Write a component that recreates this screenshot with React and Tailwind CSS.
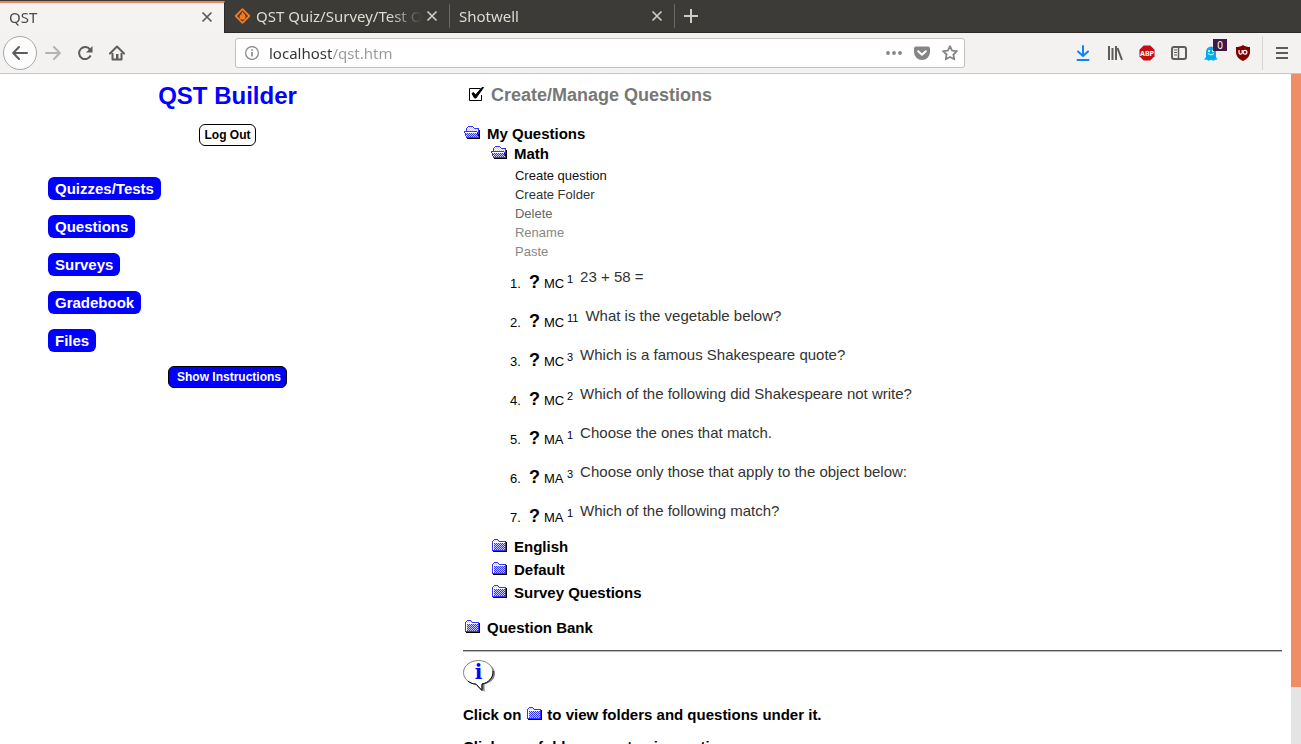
import React from 'react';

const palette = { B: '#3333ff', k: '#000000', l: '#ccccff', w: '#ffffff' };

const closedFolder = [
  '...BBBB.........',
  '..BwlwlB........',
  '.BwlwlwlBBBBBBB.',
  '.BwwwwwwwwwwwwBk',
  '.BwBlBlBlBlBlBBk',
  '.BwlBlBlBlBlBlBk',
  '.BwBlBlBlBlBlBBk',
  '.BwlBlBlBlBlBlBk',
  '.BwBlBlBlBlBlBBk',
  '.BwlBlBlBlBlBlBk',
  '.BwBlBlBlBlBlBBk',
  '.BBBBBBBBBBBBBBk',
  '..kkkkkkkkkkkkkk',
];

const openFolder = [
  '....BBBBB.......',
  '...BwlwlwB......',
  '..BwlwlwlwBBBBB.',
  '..BlwlwlwlwlwlB.',
  '..BwlwlwlwlwlwBk',
  'BBBBBBBBBBBBBlBk',
  'BwwwwwwwwwwwwBBk',
  '.BlBlBlBlBlBlkBk',
  '.BBlBlBlBlBlBBkk',
  '.BwBlBlBlBlBlBkk',
  '..BlBlBlBlBlBlBk',
  '..BBBBBBBBBBBBBk',
  '...kkkkkkkkkkkkk',
];

const Folder = ({ open }) => (
  <svg width="16" height="13" viewBox="0 0 16 13" shapeRendering="crispEdges" className="mt-[2px] shrink-0">
    {(open ? openFolder : closedFolder).map((row, y) =>
      row.split('').map((c, x) =>
        c === '.' ? null : <rect key={`${x}-${y}`} x={x} y={y} width="1" height="1" fill={palette[c]} />
      )
    )}
  </svg>
);

const FolderRow = ({ name, open, className = '' }) => (
  <button className={`flex items-start gap-[7px] text-[15px] leading-5 font-bold ${className}`}>
    <Folder open={open} />
    {name}
  </button>
);

const CloseIcon = () => (
  <svg width="12" height="12" viewBox="0 0 12 12" fill="none" stroke="currentColor" strokeWidth="1.7">
    <path d="M1.5 1.5l9 9M10.5 1.5l-9 9" />
  </svg>
);

const Tab = ({ title, active, icon }) => (
  <div
    className={`flex w-[225px] items-center border-r pl-[9px] pr-[11px] ${
      active
        ? 'mt-px h-8 border-r-[#2a2925] border-t-2 border-t-[#f0845c] bg-[#f4f3f2] pb-[3px] text-[#4a4a4a]'
        : 'mt-1 h-6 border-r-[#6a6965] text-[#dfdbd2]'
    }`}
  >
    {icon}
    <button className="min-w-0 flex-1 overflow-hidden text-left whitespace-nowrap [mask-image:linear-gradient(90deg,#000_calc(100%-32px),transparent)]">
      {title}
    </button>
    <button aria-label={`Close ${title}`} className="ml-1 opacity-90">
      <CloseIcon />
    </button>
  </div>
);

const ToolButton = ({ label, children, className = 'h-8 w-8' }) => (
  <button aria-label={label} className={`flex shrink-0 items-center justify-center ${className}`}>
    {children}
  </button>
);

const line = { width: 16, height: 16, viewBox: '0 0 16 16', fill: 'none', stroke: 'currentColor', strokeWidth: 2 };

const TabBar = () => (
  <div className="flex h-[33px] items-start border-b border-[#2a2925] bg-[#3c3b37] text-[15px] leading-5">
    <Tab title="QST" active />
    <Tab
      title="QST Quiz/Survey/Test O"
      icon={
        <svg width="17" height="16" viewBox="0 0 17 16" className="mr-[5px] shrink-0">
          <path d="M8.5 1.2L15.3 8l-6.8 6.8L1.7 8z" fill="none" stroke="#f47b20" strokeWidth="1.8" strokeLinejoin="round" />
          <path d="M8.8 3.6c.2 1.8 2.7 2.8 2.7 5.1a3 3 0 0 1-6 0c0-1.1.5-1.8 1.1-2.5.1.7.3 1 .7 1.2-.2-1.500.4-2.900 1.500-3.800z" fill="#f47b20" />
        </svg>
      }
    />
    <Tab title="Shotwell" />
    <button aria-label="New tab" className="flex h-8 w-8 items-center justify-center text-[#d2cdc4]">
      <svg width="14" height="14" viewBox="0 0 14 14" stroke="currentColor" strokeWidth="2">
        <path d="M7 0v14M0 7h14" />
      </svg>
    </button>
  </div>
);

const Toolbar = () => (
  <div className="flex h-[41px] items-center border-b border-[#c4c4c4] bg-[#f3f2f1] pl-[3px] text-[#5c5c5c]">
    <ToolButton label="Back" className="h-[34px] w-[34px] rounded-full border border-[#a9a7a5] bg-[#fcfcfc]">
      <svg {...line} strokeLinecap="round" strokeLinejoin="round">
        <path d="M15 8H1.5M7 2L1.2 8 7 14" />
      </svg>
    </ToolButton>
    <ToolButton label="Forward">
      <svg {...line} strokeLinecap="round" strokeLinejoin="round" className="text-[#b5b4b3]">
        <path d="M1 8h13.5M9 2l5.8 6L9 14" />
      </svg>
    </ToolButton>
    <ToolButton label="Reload">
      <svg {...line}>
        <path d="M13 4.6A6 6 0 1 0 13.6 10.5" />
        <path d="M15.5 1v6.5H9z" fill="currentColor" stroke="none" />
      </svg>
    </ToolButton>
    <ToolButton label="Home">
      <svg {...line}>
        <path d="M1 8.5L8 1.5l7 7" strokeLinecap="round" strokeLinejoin="round" />
        <path d="M3.5 8v6.5h9V8" strokeLinejoin="round" />
        <path d="M7 9h2.5v6H7z" fill="currentColor" stroke="none" />
      </svg>
    </ToolButton>

    <div className="mx-[102px] flex h-[30px] min-w-0 flex-1 items-center rounded-[3px] border border-[#c5c1be] bg-white pl-[9px] text-[#858585]">
      <svg width="14" height="14" viewBox="0 0 14 14" fill="none" stroke="currentColor" className="shrink-0">
        <circle cx="7" cy="7" r="6.4" strokeWidth="1.2" />
        <path d="M7 6v4.5M7 3.2v1.6" strokeWidth="1.6" />
      </svg>
      <input
        aria-label="Address"
        defaultValue="localhost/qst.htm"
        className="ml-[10px] min-w-0 flex-1 bg-[linear-gradient(90deg,#333_63px,#999_63px)] bg-clip-text text-[15px] leading-5 text-transparent outline-none"
      />
      <ToolButton label="Page actions" className="h-7 w-7">
        <svg width="16" height="4" viewBox="0 0 16 4" fill="currentColor">
          <circle cx="2" cy="2" r="1.9" />
          <circle cx="8" cy="2" r="1.9" />
          <circle cx="14" cy="2" r="1.9" />
        </svg>
      </ToolButton>
      <ToolButton label="Save to Pocket" className="h-7 w-7">
        <svg width="16" height="16" viewBox="0 0 16 16">
          <path d="M2 1.5h12a2 2 0 0 1 2 2V7a8 8 0 0 1-16 0V3.5a2 2 0 0 1 2-2z" fill="currentColor" />
          <path d="M4.2 6.2L8 9.8l3.8-3.6" fill="none" stroke="#fff" strokeWidth="2" strokeLinecap="round" strokeLinejoin="round" />
        </svg>
      </ToolButton>
      <ToolButton label="Bookmark" className="h-7 w-7">
        <svg {...line} strokeWidth="1.8" strokeLinejoin="round">
          <path d="M8 1.2l2.1 4.4 4.8.6-3.5 3.3.9 4.8L8 12l-4.3 2.3.9-4.8L1.1 6.2l4.8-.6z" />
        </svg>
      </ToolButton>
    </div>

    <ToolButton label="Downloads">
      <svg {...line} className="text-[#0a84ff]" strokeLinecap="round" strokeLinejoin="round">
        <path d="M8 1v9.5M3 6.500l5 4.500 5-4.500M2.500 15h11" />
      </svg>
    </ToolButton>
    <ToolButton label="Library">
      <svg {...line}>
        <path d="M2 1v14M5.5 3v12M9 1v14M10.5 3l4.5 12" />
      </svg>
    </ToolButton>
    <ToolButton label="Adblock Plus">
      <svg width="16" height="16" viewBox="0 0 17 17">
        <path d="M5 .5h7L16.5 5v7L12 16.5H5L.5 12V5z" fill="#c70d12" />
        <text x="8.5" y="11.2" fontSize="7.5" fontWeight="bold" textAnchor="middle" fill="#fff">ABP</text>
      </svg>
    </ToolButton>
    <ToolButton label="Sidebar">
      <svg {...line}>
        <rect x="1" y="2" width="14" height="12" rx="2" />
        <path d="M7.5 2v12" strokeWidth="1.5" />
        <path d="M3 5h3M3 7.5h3M3 10h3" strokeWidth="1" />
      </svg>
    </ToolButton>
    <ToolButton label="Ghostery" className="relative h-8 w-8">
      <svg width="14" height="16" viewBox="0 0 14 16">
        <path d="M2 7a5 5.5 0 0 1 10 0v5l1.5 2.5-2.5.2-1.5 1-2.5-1-2.500 1-1.500-1-3-.2L2 12z" fill="#00aef0" />
        <circle cx="5" cy="6" r="1" fill="#fff" />
        <circle cx="9" cy="6" r="1" fill="#fff" />
        <path d="M4 8.5q3 3 6 0" fill="none" stroke="#fff" />
      </svg>
      <span className="absolute top-[2px] right-0 h-3 w-[14px] bg-[#421844] text-center text-[10px] leading-3 text-white">0</span>
    </ToolButton>
    <ToolButton label="uBlock Origin">
      <svg width="16" height="16" viewBox="0 0 16 16">
        <path d="M8 0c2 1.5 4.5 2 7 2v5c0 4.5-3 7-7 9-4-2-7-4.5-7-9V2c2.5 0 5-.5 7-2z" fill="#800000" />
        <path d="M4 5v2.5a1.6 1.6 0 0 0 3.2 0V5" fill="none" stroke="#fff" strokeWidth="1.2" />
        <circle cx="10" cy="7.2" r="1.9" fill="none" stroke="#fff" strokeWidth="1.2" />
      </svg>
    </ToolButton>
    <div className="ml-[3px] h-[34px] w-px bg-[#d8d6d5]" />
    <ToolButton label="Menu" className="h-8 w-[38px]">
      <svg {...line} width="12" height="14" viewBox="0 0 12 14">
        <path d="M0 2h12M0 7h12M0 12h12" />
      </svg>
    </ToolButton>
  </div>
);

const sections = ['Quizzes/Tests', 'Questions', 'Surveys', 'Gradebook', 'Files'];

const Sidebar = () => (
  <aside className="flex w-[calc((100%+74px)/3)] shrink-0 flex-col items-center pt-2">
    <h1 className="text-[24px] leading-7 font-bold text-[#0000ff]">QST Builder</h1>
    <button className="mt-[14px] h-[22px] rounded-md border border-black px-[5px] text-[12px] leading-5 font-bold">
      Log Out
    </button>
    <nav className="mt-[31px] flex flex-col items-start gap-[15px] self-stretch pl-12">
      {sections.map((name) => (
        <button key={name} className="h-[23px] rounded-md bg-[#0000ff] px-[7px] text-[15px] leading-5 font-bold text-white">
          {name}
        </button>
      ))}
    </nav>
    <button className="mt-[14px] h-[22px] rounded-md border border-black bg-[#0000ff] pr-[5px] pl-2 text-[12px] leading-5 font-bold text-white">
      Show Instructions
    </button>
  </aside>
);

const questions = [
  { type: 'MC', points: 1, text: '23 + 58 =' },
  { type: 'MC', points: 11, text: 'What is the vegetable below?' },
  { type: 'MC', points: 3, text: 'Which is a famous Shakespeare quote?' },
  { type: 'MC', points: 2, text: 'Which of the following did Shakespeare not write?' },
  { type: 'MA', points: 1, text: 'Choose the ones that match.' },
  { type: 'MA', points: 3, text: 'Choose only those that apply to the object below:' },
  { type: 'MA', points: 1, text: 'Which of the following match?' },
];

const InfoIcon = () => (
  <svg width="32" height="32" viewBox="0 0 32 32" className="mt-2">
    <path d="M17 2.5c8.5 0 15 5 15 11 0 5.5-4.5 9.5-10.5 10.8V32l-6-7.5z" fill="#808080" />
    <path
      d="M15.5.5c8 0 14.5 5.2 14.5 12 0 6-5 10.5-11 11.5v6.5L13 24.2C6 23.5.5 18.8.5 12.5.5 5.7 7.5.5 15.5.5z"
      fill="#fff"
      stroke="#808080"
    />
    <path d="M30 11c.5 6.5-4.5 12-11 13v6.5L13 24.2c-3-.2-6-1.4-8-3" fill="none" stroke="#000" />
    <text x="15.5" y="19" fontSize="20" fontWeight="bold" textAnchor="middle" fill="#0000ff" className="font-['DejaVu_Serif',serif]">
      i
    </text>
  </svg>
);

const Main = () => (
  <main className="min-w-0 flex-1 pt-[10px] pr-[9px] pl-2">
    <h2 className="flex items-center text-[18px] leading-[22px] font-bold text-[#777]">
      <svg width="16" height="16" viewBox="0 0 16 16" fill="none" stroke="#000" className="mr-1.5 ml-1.5">
        <path d="M12.5 8v5.5H.5v-12h11" />
        <path d="M3 6.5l1.5-1 2 2.5L13 .5h1.5L7 11H5.500z" fill="#000" />
      </svg>
      Create/Manage Questions
    </h2>

    <FolderRow name="My Questions" open className="mt-[18px] ml-px" />
    <div className="pl-7">
      <FolderRow name="Math" open />
      <div className="mt-[2px] flex flex-col items-start pl-6 text-[13px] leading-[19px]">
        <button className="text-[#111]">Create question</button>
        <button className="text-[#333]">Create Folder</button>
        <button className="text-[#666]">Delete</button>
        <button className="text-[#888]">Rename</button>
        <button className="text-[#888]">Paste</button>
      </div>
      <ol className="pl-[19px]">
        {questions.map((q, i) => (
          <li key={i} className="flex h-[39px] items-start text-[13px] leading-5">
            <div className="flex items-baseline pt-[11px]">
              <span className="w-[19px]">{i + 1}.</span>
              <b className="w-[15px] text-[18px] leading-5">?</b>
              <span className="w-[23px]">{q.type}</span>
            </div>
            <span className="pt-2 text-[11px] leading-5">{q.points}</span>
            <a href="#question" className="pt-1.5 pl-[7px] text-[15px] leading-5 text-[#333]">{q.text}</a>
          </li>
        ))}
      </ol>
      <div className="mt-[3px] flex flex-col items-start gap-[3px]">
        <FolderRow name="English" />
        <FolderRow name="Default" />
        <FolderRow name="Survey Questions" />
      </div>
    </div>
    <FolderRow name="Question Bank" className="mt-[15px] ml-px" />

    <hr className="mt-3 h-[2px] border-t border-b border-t-[#555] border-b-[#bbb]" />
    <InfoIcon />
    <p className="mt-[13px] flex items-start gap-[5px] text-[15px] leading-5 font-bold">
      Click on <Folder /> to view folders and questions under it.
    </p>
    <p className="mt-3 text-[15px] leading-5 font-bold">Click on a folder name to view options.</p>
  </main>
);

const App = () => (
  <div className="flex h-screen flex-col overflow-hidden bg-white font-['Liberation_Sans',Arial,sans-serif] text-black">
    <header className="shrink-0 font-['Noto_Sans',sans-serif]">
      <TabBar />
      <Toolbar />
    </header>
    <div className="flex min-h-0 flex-1">
      <div className="flex min-w-0 flex-1 overflow-hidden">
        <Sidebar />
        <Main />
      </div>
      <div className="w-[10px] shrink-0 bg-[#e4e4e4]">
        <div className="h-[91.5%] bg-[#f08c66]" />
      </div>
    </div>
  </div>
);

export default App;
